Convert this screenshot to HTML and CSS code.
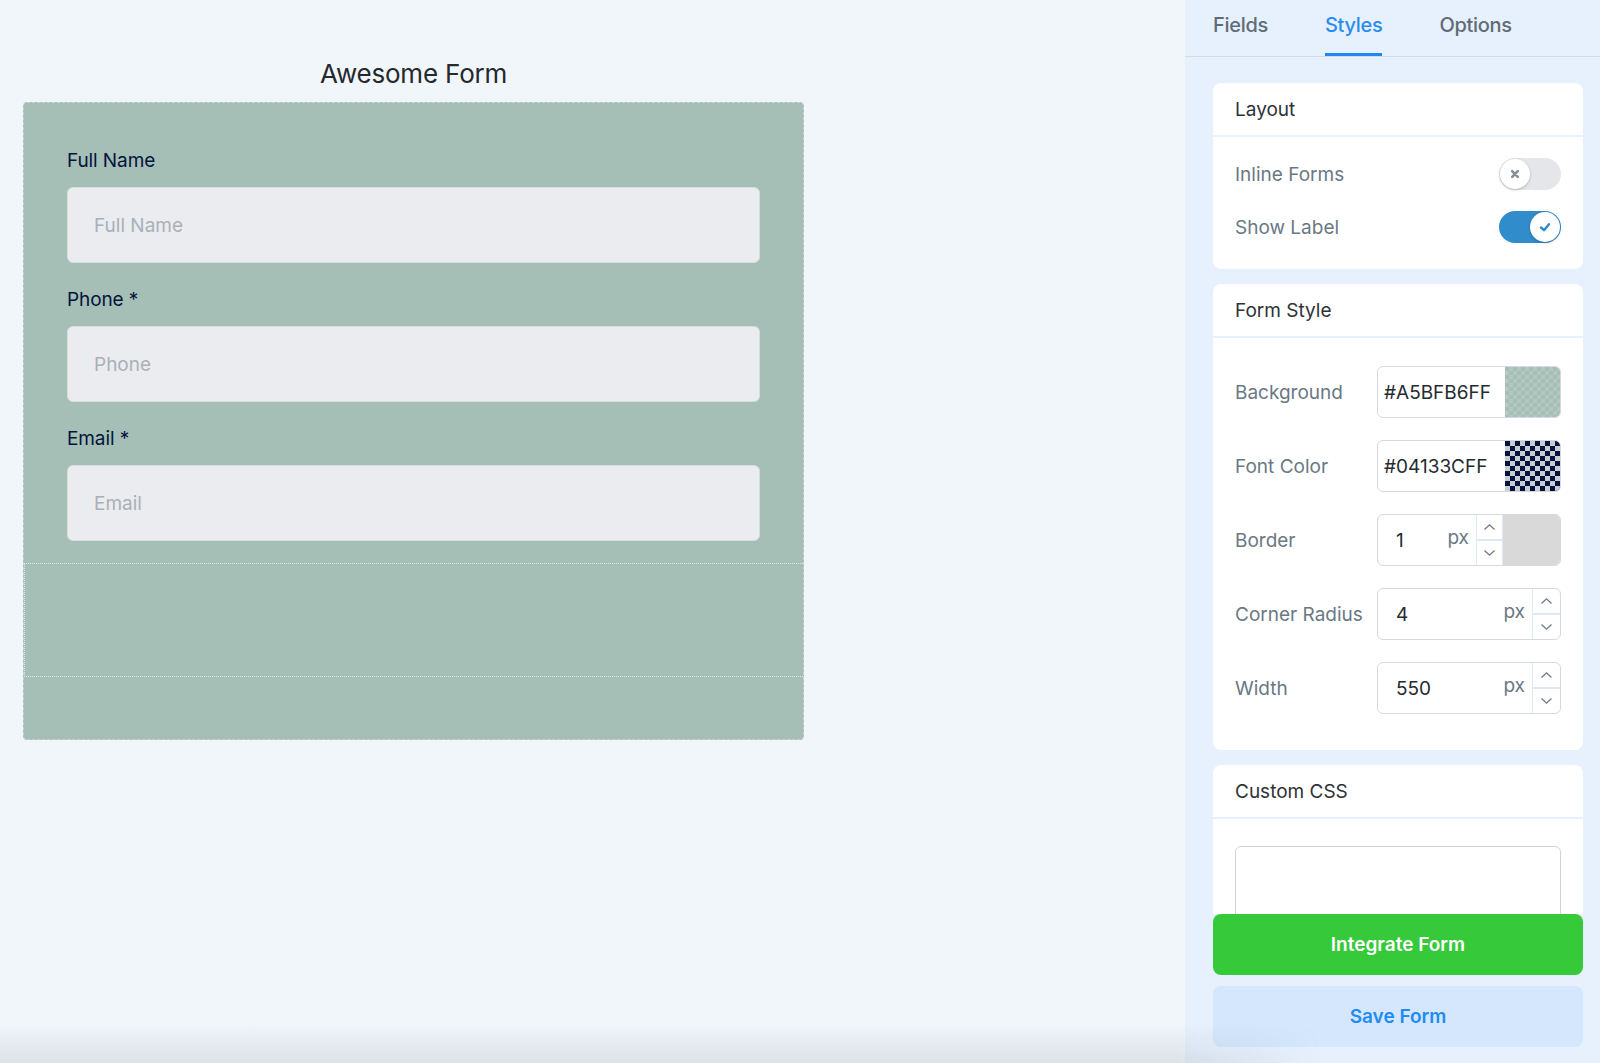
FILE: index.html
```html
<!DOCTYPE html>
<html>
<head>
<meta charset="utf-8">
<link rel="stylesheet" href="styles.css">
</head>
<body>
<div class="app">
  <main class="canvas">
    <h1 class="form-title">Awesome Form</h1>
    <div class="form-box">
      <div class="fields">
        <div class="field">
          <label class="field-label">Full Name</label>
          <div class="field-input">Full Name</div>
        </div>
        <div class="field">
          <label class="field-label">Phone *</label>
          <div class="field-input">Phone</div>
        </div>
        <div class="field">
          <label class="field-label">Email *</label>
          <div class="field-input">Email</div>
        </div>
      </div>
      <div class="drop-zone"></div>
      <div class="form-foot"></div>
    </div>
  </main>

  <aside class="sidebar">
    <nav class="tabs">
      <span class="tab">Fields</span>
      <span class="tab active">Styles</span>
      <span class="tab">Options</span>
    </nav>

    <div class="panel-scroll">
      <section class="card">
        <header class="card-head">Layout</header>
        <div class="card-body layout-body">
          <div class="toggle-row">
            <span class="row-label">Inline Forms</span>
            <span class="toggle off"><span class="knob">
              <svg width="12" height="12" viewBox="0 0 12 12"><path d="M3.2 3.2 L8.8 8.8 M8.8 3.2 L3.2 8.8" stroke="#858d96" stroke-width="2.6" stroke-linecap="round"/></svg>
            </span></span>
          </div>
          <div class="toggle-row">
            <span class="row-label">Show Label</span>
            <span class="toggle on"><span class="knob">
              <svg width="14" height="14" viewBox="0 0 14 14"><path d="M3 7.5 L6 10.2 L11 4.2" fill="none" stroke="#2f88c8" stroke-width="2.4" stroke-linecap="round" stroke-linejoin="round"/></svg>
            </span></span>
          </div>
        </div>
      </section>

      <section class="card">
        <header class="card-head">Form Style</header>
        <div class="card-body style-body">
          <div class="style-row">
            <span class="row-label">Background</span>
            <div class="ctl">
              <span class="ctl-text">#A5BFB6FF</span>
              <span class="swatch swatch-bg"></span>
            </div>
          </div>
          <div class="style-row">
            <span class="row-label">Font Color</span>
            <div class="ctl">
              <span class="ctl-text">#04133CFF</span>
              <span class="swatch swatch-font"></span>
            </div>
          </div>
          <div class="style-row">
            <span class="row-label">Border</span>
            <div class="ctl">
              <span class="num">1</span>
              <span class="unit">px</span>
              <span class="spin">
                <span class="spin-btn"><svg width="13" height="8" viewBox="0 0 13 8"><path d="M1.5 6.5 L6.5 1.8 L11.5 6.5" fill="none" stroke="#6f7b86" stroke-width="1.3"/></svg></span>
                <span class="spin-btn"><svg width="13" height="8" viewBox="0 0 13 8"><path d="M1.5 1.5 L6.5 6.2 L11.5 1.5" fill="none" stroke="#6f7b86" stroke-width="1.3"/></svg></span>
              </span>
              <span class="swatch swatch-gray"></span>
            </div>
          </div>
          <div class="style-row">
            <span class="row-label">Corner Radius</span>
            <div class="ctl">
              <span class="num">4</span>
              <span class="unit">px</span>
              <span class="spin wide">
                <span class="spin-btn"><svg width="13" height="8" viewBox="0 0 13 8"><path d="M1.5 6.5 L6.5 1.8 L11.5 6.5" fill="none" stroke="#6f7b86" stroke-width="1.3"/></svg></span>
                <span class="spin-btn"><svg width="13" height="8" viewBox="0 0 13 8"><path d="M1.5 1.5 L6.5 6.2 L11.5 1.5" fill="none" stroke="#6f7b86" stroke-width="1.3"/></svg></span>
              </span>
            </div>
          </div>
          <div class="style-row">
            <span class="row-label">Width</span>
            <div class="ctl">
              <span class="num">550</span>
              <span class="unit">px</span>
              <span class="spin wide">
                <span class="spin-btn"><svg width="13" height="8" viewBox="0 0 13 8"><path d="M1.5 6.5 L6.5 1.8 L11.5 6.5" fill="none" stroke="#6f7b86" stroke-width="1.3"/></svg></span>
                <span class="spin-btn"><svg width="13" height="8" viewBox="0 0 13 8"><path d="M1.5 1.5 L6.5 6.2 L11.5 1.5" fill="none" stroke="#6f7b86" stroke-width="1.3"/></svg></span>
              </span>
            </div>
          </div>
        </div>
      </section>

      <section class="card">
        <header class="card-head">Custom CSS</header>
        <div class="card-body css-body">
          <div class="css-area"></div>
        </div>
      </section>
    </div>

    <footer class="actions">
      <button class="btn btn-green">Integrate Form</button>
      <button class="btn btn-light">Save Form</button>
    </footer>
  </aside>
  <div class="bottom-shade"></div>
</div>
</body>
</html>
```

FILE: styles.css
```css
* { box-sizing: border-box; }

html, body {
  margin: 0;
  padding: 0;
  width: 1600px;
  height: 1063px;
  overflow: hidden;
  font-family: Inter, "Noto Sans", "Liberation Sans", sans-serif;
  background: #f1f6fa;
}

.app {
  position: relative;
  display: flex;
  width: 1600px;
  height: 1063px;
}

/* ---------- canvas ---------- */
.canvas {
  flex: 1;
  padding: 58px 0 0 23px;
}

.form-title {
  width: 781px;
  margin: 0 0 12px;
  text-align: center;
  font-size: 26px;
  line-height: 32px;
  font-weight: 400;
  color: #24292e;
  letter-spacing: -0.2px;
}

.form-box {
  width: 781px;
  background: #a5bfb6;
  border: 1px dashed #c6d3d6;
  border-radius: 4px;
}

.fields {
  padding: 46px 43px 22px;
  display: flex;
  flex-direction: column;
  gap: 25px;
}

.field {
  display: flex;
  flex-direction: column;
  gap: 14px;
}

.field-label {
  font-size: 19px;
  line-height: 24px;
  color: #04133c;
  letter-spacing: -0.1px;
}

.field-input {
  height: 76px;
  background: #ebecf0;
  border: 1px solid #d6dedb;
  border-radius: 6px;
  padding: 0 26px;
  display: flex;
  align-items: center;
  font-size: 19px;
  color: #a9b0b8;
}

.drop-zone {
  height: 114px;
  border-top: 1px dotted #e3ebe8;
  border-bottom: 1px dotted #e3ebe8;
  border-left: 1px dotted #e3ebe8;
}

.form-foot {
  height: 62px;
}

/* ---------- sidebar ---------- */
.sidebar {
  width: 415px;
  flex: none;
  background: #e6f1fd;
  display: flex;
  flex-direction: column;
}

.tabs {
  display: flex;
  gap: 57px;
  padding-left: 28px;
  height: 57px;
  border-bottom: 1px solid #cfdbe6;
}

.tab {
  height: 56px;
  padding-top: 10px;
  line-height: 30px;
  font-size: 20px;
  font-weight: 500;
  letter-spacing: -0.3px;
  color: #5f6c77;
  border-bottom: 3px solid transparent;
}

.tab.active {
  color: #2a8cf0;
  border-bottom-color: #1f86f2;
}

.panel-scroll {
  flex: 1;
  overflow: hidden;
  padding: 26px 17px 0 28px;
  display: flex;
  flex-direction: column;
  gap: 15px;
}

.card {
  background: #ffffff;
  border-radius: 8px;
  flex: none;
}

.card-head {
  height: 54px;
  padding: 0 22px;
  display: flex;
  align-items: center;
  font-size: 19px;
  color: #2d3236;
  border-bottom: 2px solid #e6f1fd;
}

.card-body {
  padding: 0 22px;
}

.row-label {
  font-size: 19px;
  color: #6a7884;
}

.layout-body {
  padding-top: 21px;
  padding-bottom: 26px;
  display: flex;
  flex-direction: column;
  gap: 21px;
}

.toggle-row {
  height: 32px;
  display: flex;
  align-items: center;
  justify-content: space-between;
}

.toggle {
  position: relative;
  width: 62px;
  height: 32px;
  border-radius: 16px;
  display: flex;
  align-items: center;
  padding: 0 1px;
}

.toggle.off {
  background: #e4e6ea;
  justify-content: flex-start;
}

.toggle.on {
  background: #318ccb;
  justify-content: flex-end;
}

.knob {
  width: 30px;
  height: 30px;
  border-radius: 50%;
  background: #fff;
  box-shadow: 0 1px 3px rgba(0, 0, 0, 0.22);
  display: flex;
  align-items: center;
  justify-content: center;
}

.style-body {
  padding-top: 28px;
  padding-bottom: 36px;
  display: flex;
  flex-direction: column;
  gap: 22px;
}

.style-row {
  height: 52px;
  display: flex;
  align-items: center;
}

.style-row .row-label {
  width: 142px;
  flex: none;
}

.ctl {
  flex: 1;
  height: 52px;
  border: 1px solid #d3d9df;
  border-radius: 6px;
  display: flex;
  align-items: stretch;
  overflow: hidden;
  background: #fff;
}

.ctl-text {
  flex: 1;
  display: flex;
  align-items: center;
  padding-left: 6px;
  font-size: 19px;
  color: #262b30;
}

.swatch {
  width: 55px;
  flex: none;
}

.swatch-bg {
  background-color: #a5bfb6;
  background-image: conic-gradient(#b3c8c0 25%, transparent 0 50%, #b3c8c0 0 75%, transparent 0);
  background-size: 8px 8px;
}

.swatch-font {
  background-color: #04133c;
  background-image: conic-gradient(#c9ccd2 25%, transparent 0 50%, #c9ccd2 0 75%, transparent 0);
  background-size: 10px 10px;
}

.swatch-gray {
  width: 57px;
  background: #d9d9d9;
}

.num {
  flex: 1;
  display: flex;
  align-items: center;
  padding-left: 18px;
  font-size: 19px;
  color: #262b30;
}

.unit {
  display: flex;
  align-items: center;
  padding-right: 7px;
  padding-bottom: 6px;
  font-size: 19px;
  color: #6a7884;
}

.spin {
  width: 27px;
  flex: none;
  display: flex;
  flex-direction: column;
  border-left: 1px solid #dde9f4;
  border-right: 1px solid #dde9f4;
}

.spin.wide {
  width: 28px;
  border-right: none;
}

.spin-btn {
  flex: 1;
  display: flex;
  align-items: center;
  justify-content: center;
}

.spin-btn + .spin-btn {
  border-top: 2px solid #dde9f4;
}

.css-body {
  padding-top: 27px;
  padding-bottom: 20px;
}

.css-area {
  height: 120px;
  border: 1px solid #cdd3d9;
  border-radius: 6px;
}

.actions {
  flex: none;
  padding: 0 17px 16px 28px;
  display: flex;
  flex-direction: column;
  gap: 11px;
}

.btn {
  height: 61px;
  border: none;
  border-radius: 8px;
  font-family: inherit;
  font-size: 19px;
  font-weight: 600;
  cursor: pointer;
}

.btn-green {
  background: #36c93a;
  color: #ffffff;
}

.btn-light {
  background: #d4e7fc;
  color: #1f8bf3;
}

.bottom-shade {
  position: absolute;
  left: 0;
  bottom: 0;
  width: 1320px;
  height: 42px;
  pointer-events: none;
  background: linear-gradient(to bottom, rgba(120, 130, 140, 0), rgba(120, 130, 140, 0.16));
  -webkit-mask-image: linear-gradient(to right, #000 1180px, transparent 1320px);
  mask-image: linear-gradient(to right, #000 1180px, transparent 1320px);
}
```
